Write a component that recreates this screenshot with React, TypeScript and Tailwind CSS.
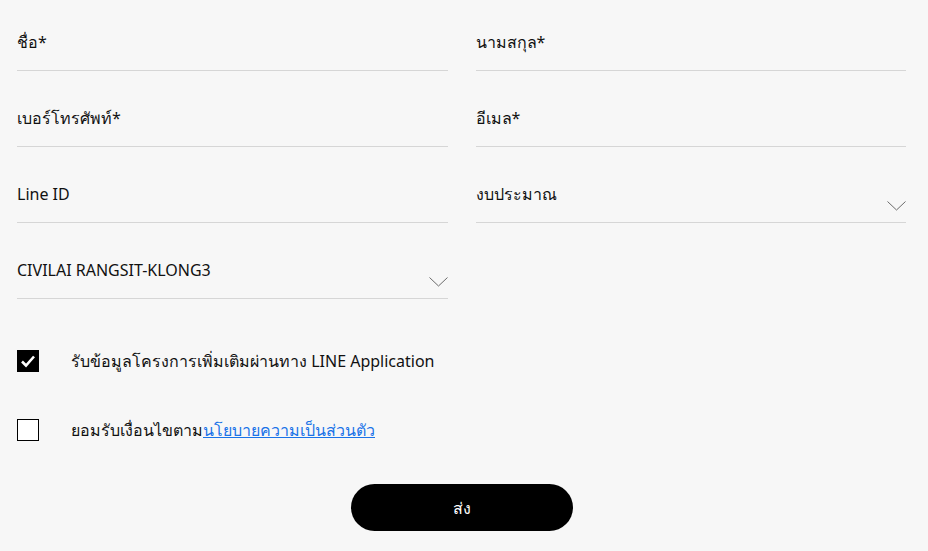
import React, { useState } from 'react';

const Chevron = () => (
    <svg width="19" height="10" viewBox="0 0 19 10" fill="none" className="shrink-0">
        <path d="M0.5 0.5L9.5 9L18.5 0.5" stroke="#6b6b6b" strokeWidth="1" />
    </svg>
);

const Field = ({ label, select }: { label: string; select?: boolean }) => (
    <div className="flex items-end justify-between h-[52px] pt-[11px] pb-[11px] border-b border-[#d6d6d6]">
        <span className="self-start leading-6 text-[16px] text-[#111]">{label}</span>
        {select && <Chevron />}
    </div>
);

export default function App() {
    const [lineOptIn, setLineOptIn] = useState(true);
    const [consent, setConsent] = useState(false);

    return (
        <div
            className="w-[928px] h-[551px] bg-[#f7f7f7] pl-[17px] pr-[22px] pt-[19px] overflow-hidden"
            style={{ fontFamily: '"Noto Sans", "Open Sans", sans-serif' }}
        >
            <div className="grid grid-cols-2 gap-x-[28px] gap-y-[24px]">
                <Field label="ชื่อ*" />
                <Field label="นามสกุล*" />
                <Field label="เบอร์โทรศัพท์*" />
                <Field label="อีเมล*" />
                <Field label="Line ID" />
                <Field label="งบประมาณ" select />
                <Field label="CIVILAI RANGSIT-KLONG3" select />
            </div>

            <div className="mt-[51px] h-[22px] flex items-center gap-[32px]">
                <button
                    type="button"
                    onClick={() => setLineOptIn(!lineOptIn)}
                    className={`w-[22px] h-[22px] shrink-0 flex items-center justify-center ${lineOptIn ? 'bg-black' : 'border border-black bg-white'}`}
                >
                    {lineOptIn && (
                        <svg width="16" height="14" viewBox="0 0 16 14" fill="none">
                            <path d="M2 7.5L6 11.5L14 2.5" stroke="white" strokeWidth="2.6" />
                        </svg>
                    )}
                </button>
                <span className="text-[16px] leading-6 text-[#111]">รับข้อมูลโครงการเพิ่มเติมผ่านทาง LINE Application</span>
            </div>

            <div className="mt-[47px] h-[22px] flex items-center gap-[32px]">
                <button
                    type="button"
                    onClick={() => setConsent(!consent)}
                    className={`w-[22px] h-[22px] shrink-0 flex items-center justify-center ${consent ? 'bg-black' : 'border border-black bg-white'}`}
                />
                <span className="text-[16px] leading-6 text-[#111]">
                    ยอมรับเงื่อนไขตาม<a href="#" className="text-[#1a73e8] underline">นโยบายความเป็นส่วนตัว</a>
                </span>
            </div>

            <div className="mt-[43px] flex justify-center">
                <button className="w-[222px] h-[47px] rounded-full bg-black text-white text-[16px]">
                    ส่ง
                </button>
            </div>
        </div>
    );
}
